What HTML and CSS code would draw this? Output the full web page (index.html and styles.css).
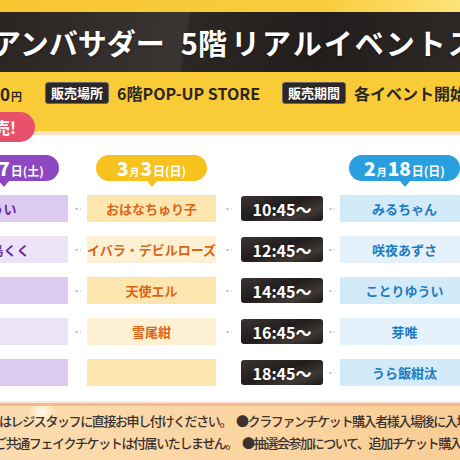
FILE: index.html
```html
<!DOCTYPE html>
<html lang="ja">
<head>
  <meta charset="UTF-8" />
  <title>アンバサダー 5階リアルイベント</title>
  <link rel="stylesheet" href="styles.css">
</head>
<body>
  <div class="page">
    <div class="top-band"></div>

    <div class="title-bar">
      <h1>アンバサダー<span class="floor">5階</span><span class="wide">リアルイベントスペシャル</span></h1>
    </div>

    <div class="info">
      <div class="info-row">
        <span class="price">0<small>円</small></span>
        <span class="label label-place">販売場所</span>
        <span class="info-text">6階POP-UP STORE</span>
        <span class="label label-period">販売期間</span>
        <span class="info-text">各イベント開始時より販売</span>
      </div>
    </div>

    <div class="badge">新発売!</div>

    <div class="schedule">
      <div class="bubble purple"><b>2</b><small>月</small><b>17</b><span>日(土)</span></div>
      <div class="bubble yellow"><b>3</b><small>月</small><b>3</b><span>日(日)</span></div>
      <div class="bubble blue"><b>2</b><small>月</small><b>18</b><span>日(日)</span></div>

      <div class="name purple odd">うい</div>
      <div class="dots"></div>
      <div class="name yellow odd">おはなちゅり子</div>
      <div class="dots"></div>
      <div class="time">10:45～</div>
      <div class="dots"></div>
      <div class="name blue odd">みるちゃん</div>

      <div class="name purple">白鳥くく</div>
      <div class="dots"></div>
      <div class="name yellow">イバラ・デビルローズ</div>
      <div class="dots"></div>
      <div class="time">12:45～</div>
      <div class="dots"></div>
      <div class="name blue">咲夜あずさ</div>

      <div class="name purple odd"></div>
      <div class="dots"></div>
      <div class="name yellow odd">天使エル</div>
      <div class="dots"></div>
      <div class="time">14:45～</div>
      <div class="dots"></div>
      <div class="name blue odd">ことりゆうい</div>

      <div class="name purple"></div>
      <div class="dots"></div>
      <div class="name yellow">雪尾紺</div>
      <div class="dots"></div>
      <div class="time">16:45～</div>
      <div class="dots"></div>
      <div class="name blue">芽唯</div>

      <div class="name purple odd"></div>
      <div class="dots hidden"></div>
      <div class="name yellow odd"></div>
      <div class="dots hidden"></div>
      <div class="time">18:45～</div>
      <div class="dots"></div>
      <div class="name blue odd">うら飯紺汰</div>
    </div>

    <div class="notes">
      <div class="note-line">
        <span class="note-left">●ご購入はレジスタッフに直接お申し付けください。</span>
        <span class="note-right">●クラファンチケット購入者様入場後に入場となります。</span>
      </div>
      <div class="note-line l2">
        <span class="note-left">●ご共通フェイクチケットは付属いたしません。</span>
        <span class="note-right">●抽選会参加について、追加チケット購入は不要です。</span>
      </div>
    </div>
  </div>
</body>
</html>
```

FILE: styles.css
```css
body {
  margin: 0;
  background: #fff;
  font-family: "Noto Sans CJK JP", "Noto Sans", sans-serif;
}

.page {
  position: relative;
  width: 460px;
  height: 460px;
  overflow: hidden;
  background: #fff;
}

/* header */
.top-band {
  height: 12px;
  background: linear-gradient(90deg, #f8c631 0%, #f9cc3c 70%, #fde27a 100%);
}

.title-bar {
  height: 60px;
  display: flex;
  align-items: center;
  background: linear-gradient(100deg, #2a2523 0%, #3a3432 40%, #2c2725 41%, #221e1d 70%, #2e2927 100%);
}

.title-bar h1 {
  margin: 0;
  font-size: 29px;
  font-weight: 700;
  line-height: 1;
  color: #fff;
  white-space: nowrap;
  text-indent: -8px;
  text-shadow: 0 1px 2px rgba(0,0,0,0.5);
}

.floor {
  margin-left: 16px;
}

.wide {
  margin-left: 4px;
  letter-spacing: 2px;
}

.info {
  height: 63px;
  box-sizing: border-box;
  padding-top: 10px;
  background: #f9cb37;
  border-bottom: 4px solid #fde0c2;
}

.info-row {
  display: flex;
  align-items: center;
  height: 22px;
  white-space: nowrap;
}

.price {
  font-size: 17px;
  font-weight: 700;
  color: #2b2626;
}

.price small {
  font-size: 11px;
  margin-left: 1px;
}

.label {
  height: 22px;
  line-height: 20px;
  box-sizing: border-box;
  padding: 0 5px;
  background: #2c2827;
  border: 1px solid #6b6562;
  border-radius: 3px;
  color: #fff;
  font-size: 13px;
  font-weight: 700;
}

.label-place {
  margin-left: 23px;
}

.label-period {
  margin-left: 22px;
}

.info-text {
  margin-left: 8px;
  font-size: 16px;
  font-weight: 700;
  color: #2b2626;
}

.badge {
  position: absolute;
  top: 112px;
  left: -60px;
  width: 95px;
  height: 30px;
  box-sizing: border-box;
  padding-right: 19px;
  display: flex;
  align-items: center;
  justify-content: flex-end;
  border-radius: 15px;
  background: #e9506b;
  color: #fff;
  font-size: 16px;
  font-weight: 700;
  white-space: nowrap;
}

/* schedule */
.schedule {
  display: grid;
  grid-template-columns: 129px 19px 129px 25px 82px 17px 129px;
  grid-template-rows: 26px repeat(5, 27px);
  row-gap: 14px;
  margin-left: -61px;
  padding: 20px 0 17px;
}

.bubble {
  position: relative;
  justify-self: center;
  width: 111px;
  border-radius: 13px;
  display: flex;
  align-items: baseline;
  justify-content: center;
  color: #fff;
  font-weight: 700;
  line-height: 26px;
  white-space: nowrap;
}

.bubble::after {
  content: "";
  position: absolute;
  left: 50%;
  bottom: -6px;
  margin-left: -5px;
  border-left: 5px solid transparent;
  border-right: 5px solid transparent;
  border-top: 6px solid;
  border-top-color: inherit;
}

.bubble b {
  font-size: 19px;
}

.bubble small {
  font-size: 10px;
  margin: 0 1px;
}

.bubble span {
  font-size: 12px;
  margin-left: 1px;
}

.bubble.purple { grid-column: 1; background: #8b48c0; border-top-color: #8b48c0; }
.bubble.yellow { grid-column: 3; background: #f7c21d; border-top-color: #f7c21d; }
.bubble.blue { grid-column: 7; background: #2a9fe0; border-top-color: #2a9fe0; }

.name {
  display: flex;
  align-items: center;
  justify-content: center;
  font-size: 13px;
  font-weight: 700;
  white-space: nowrap;
}

.name.purple { background: #ece3f7; color: #6b2a9e; }
.name.purple.odd { background: #dccaf0; }
.name.yellow { background: #fef1d3; color: #d8661a; }
.name.yellow.odd { background: #fde6ae; }
.name.blue { background: #e5f2fb; color: #1b7cc4; }
.name.blue.odd { background: #d3eaf8; }

.dots {
  display: flex;
  align-items: center;
  justify-content: center;
}

.dots::before {
  content: "";
  width: 7px;
  height: 2px;
  background: radial-gradient(circle, #c4c4c4 1px, transparent 1.3px) 0 0 / 5px 2px repeat-x;
}

.dots.hidden::before {
  display: none;
}

.time {
  align-self: center;
  height: 25px;
  border-radius: 3px;
  display: flex;
  align-items: center;
  justify-content: center;
  background: linear-gradient(160deg, #3a3433 0%, #221d1c 45%, #3e3836 75%, #1c1817 100%);
  color: #fff;
  font-size: 16px;
  font-weight: 700;
}

/* notes */
.notes {
  height: 57px;
  box-sizing: border-box;
  padding-top: 3px;
  border-top: 3px solid #f5b98f;
  box-shadow: 0 -2px 0 #fde9d8;
  background:
    radial-gradient(circle at 42px 6px, rgba(255,255,240,0.9) 0, rgba(255,255,240,0) 14px),
    linear-gradient(90deg, #fcdcaf 0%, #fbd4a0 60%, #f9cd95 100%);
  font-size: 13px;
  font-weight: 500;
  letter-spacing: -1.4px;
  color: #3a3330;
}

.note-line {
  display: flex;
  align-items: center;
  height: 22px;
  white-space: nowrap;
}

.note-left {
  flex: none;
  width: 231px;
  display: flex;
  justify-content: flex-end;
}

.l2 .note-left {
  width: 237px;
}

.note-right {
  margin-left: 5px;
}
```
